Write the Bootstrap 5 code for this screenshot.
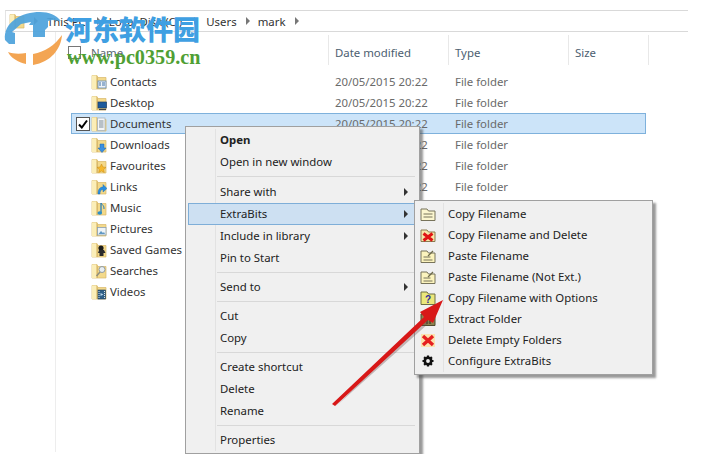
<!DOCTYPE html>
<html lang="en">
<head>
<meta charset="utf-8">
<title>ExtraBits</title>
<link href="https://cdn.jsdelivr.net/npm/bootstrap@5.3.0/dist/css/bootstrap.min.css" rel="stylesheet">
<style>
html,body{width:702px;height:454px;overflow:hidden;background:#fff;margin:0}
body{font-family:"Noto Sans","Open Sans","Liberation Sans",sans-serif;font-size:11.4px;line-height:21px;color:#2b2b2b}
.stage{position:relative;width:702px;height:454px;overflow:hidden;padding-top:10px}
.addr{margin-left:5px;margin-right:14px;height:22px;border:1px solid #d9d9d9;border-left-color:#e4e4e4;border-right:0;padding-left:3px;color:#333}
.addr svg{flex:none;margin-right:9px}
.crumb{margin-right:9px}
.crumb.c1{margin-left:1px;margin-right:11px}
.crumb.c2{margin-right:12px}
.tri{width:0;height:0;border-left:4px solid #777;border-top:4px solid transparent;border-bottom:4px solid transparent;margin-right:8px;flex:none}
.pane{margin-left:55px;border-left:1px solid #ededed;height:420px}
.heads{height:39px;color:#4c6070}
.hcell{height:30px;margin-top:3px;border-right:1px solid #e8e8e8;padding-left:6px;line-height:36px}
.hname{width:273px;padding-left:35px;color:#5a6772}
.hw{width:120px}
.hw2{width:80px}
.cb0{position:absolute;left:68px;top:46px;width:13px;height:13px;border:1px solid #777}
.fl{height:21px;margin-left:15px;width:575px}
.fl.sel{background:#cce4f9;box-shadow:inset 0 0 0 1px #7eb1dc}
.fl .mk{width:20px;flex:none;display:flex;align-items:center;justify-content:center;padding-left:3px}
.fl .ic{width:16px;height:16px;flex:none}
.fname{width:228px;padding-left:3px;flex:none;color:#333}
.fdate{width:120px;flex:none;color:#6a6a6a}
.ftype{color:#6a6a6a}
.chk{width:14px;height:14px;border:1px solid #555;background:#fff;display:flex;align-items:center;justify-content:center}
.menu1,.menu2{position:absolute;background:#f0f0f0;border:1px solid #a0a0a0;box-shadow:3px 3px 2px rgba(70,70,70,.55);color:#222}
.menu1{left:185px;top:126px;width:235px;height:328px;padding-top:2px}
.menu2{left:414px;top:200px;width:239px;height:175px;padding-top:2px}
.menu1:before,.menu2:before{content:"";position:absolute;top:2px;bottom:2px;background:#e2e2e2;width:1px}
.menu1:before{left:29px}
.menu2:before{left:28px}
.mi{height:22px;line-height:22px;padding-left:34px;position:relative}
.menu2 .mi{height:21px;line-height:21px;padding-left:33px}
.mi.hov{background:#cde0f2;box-shadow:inset 0 0 0 1px #7eaed8;margin:0 4px 0 2px;padding-left:32px}
.bold{font-weight:700}
.sp{height:1px;background:#d8d8d8;margin:3px 4px 3px 31px}
.sp.first{margin-bottom:4px}
.arr{position:absolute;right:11px;top:7px;width:0;height:0;border-left:4px solid #333;border-top:4px solid transparent;border-bottom:4px solid transparent}
.mi.hov .arr{right:7px}
.mic{position:absolute;left:5px;top:3px;width:16px;height:16px}
.overlay{position:absolute;left:0;top:0;pointer-events:none}
.wm1{position:absolute;left:65px;top:11px;font-family:"Noto Sans CJK SC",sans-serif;font-weight:900;font-size:27px;line-height:36px;color:#3f9fe2;white-space:nowrap}
.wm2{position:absolute;left:67px;top:46px;font-family:"Liberation Serif",serif;font-weight:700;font-size:20.2px;line-height:22px;color:#4f9f34;white-space:nowrap}
</style>
</head>
<body>
<svg width="0" height="0" style="position:absolute">
<defs>
<symbol id="fd" viewBox="0 0 16 16">
<path d="M1 1.500h5l1 2h8v11.500H1z" fill="#f3d98b" stroke="#d8b768" stroke-width=".7"/>
<path d="M1 1.500h4.500V15H1z" fill="#fbeeb8"/>
<path d="M5.500 1.500 7 3.500V15H5.500z" fill="#d9b96c"/>
</symbol>
</defs>
</svg>
<div class="stage">
  <div class="addr d-flex align-items-center">
    <svg width="16" height="16" viewBox="0 0 16 16"><use href="#fd"/></svg>
    <span class="tri"></span><span class="crumb c1">This PC</span><span class="tri"></span>
    <span class="crumb c2">Local Disk (C:)</span><span class="tri"></span>
    <span class="crumb">Users</span><span class="tri"></span>
    <span class="crumb">mark</span><span class="tri"></span>
  </div>
  <div class="pane">
    <div class="heads d-flex">
      <div class="hcell hname">Name</div>
      <div class="hcell hw">Date modified</div>
      <div class="hcell hw">Type</div>
      <div class="hcell hw2">Size</div>
    </div>
    <div class="fl d-flex">
      <div class="mk"></div>
      <svg class="ic align-self-center" viewBox="0 0 16 16"><use href="#fd"/><rect x="7" y="7" width="8" height="7" fill="#eef3f8" stroke="#5a86b8" stroke-width=".8"/><path d="M8 9h2M8 11h2M11 9h3M11 11h3" stroke="#3f70a8"/></svg>
      <div class="fname">Contacts</div><div class="fdate">20/05/2015 20:22</div><div class="ftype">File folder</div>
    </div>
    <div class="fl d-flex">
      <div class="mk"></div>
      <svg class="ic align-self-center" viewBox="0 0 16 16"><use href="#fd"/><rect x="7" y="7" width="8.500" height="6" fill="#1c5a9c" stroke="#1f3f66" stroke-width=".7"/><path d="M8 14.500h7" stroke="#444" stroke-width="1.200"/></svg>
      <div class="fname">Desktop</div><div class="fdate">20/05/2015 20:22</div><div class="ftype">File folder</div>
    </div>
    <div class="fl sel d-flex">
      <div class="mk"><span class="chk"><svg width="10" height="10" viewBox="0 0 10 10"><path d="M1 5.500 3.800 8.500 9 1.500" fill="none" stroke="#000" stroke-width="2"/></svg></span></div>
      <svg class="ic align-self-center" viewBox="0 0 16 16"><use href="#fd"/><rect x="6.500" y="2" width="7.500" height="12.500" fill="#f4f6f8" stroke="#a9b3bc" stroke-width=".8"/><path d="M8 5h4.500M8 7h4.500M8 9h4.500M8 11h4.500" stroke="#7d8b97"/></svg>
      <div class="fname">Documents</div><div class="fdate">20/05/2015 20:22</div><div class="ftype">File folder</div>
    </div>
    <div class="fl d-flex">
      <div class="mk"></div>
      <svg class="ic align-self-center" viewBox="0 0 16 16"><use href="#fd"/><path d="M9 7h4v4h2l-4 4.500L7 11h2z" fill="#3b8fe0" stroke="#1e64ad" stroke-width=".5"/></svg>
      <div class="fname">Downloads</div><div class="fdate">20/05/2015 20:22</div><div class="ftype">File folder</div>
    </div>
    <div class="fl d-flex">
      <div class="mk"></div>
      <svg class="ic align-self-center" viewBox="0 0 16 16"><use href="#fd"/><path d="M10.500 6l1.400 3 3.100.4-2.300 2.100.6 3.100-2.800-1.600-2.800 1.600.6-3.100L6 9.400 9.100 9z" fill="#f5b82e" stroke="#c98a16" stroke-width=".5"/></svg>
      <div class="fname">Favourites</div><div class="fdate">20/05/2015 20:22</div><div class="ftype">File folder</div>
    </div>
    <div class="fl d-flex">
      <div class="mk"></div>
      <svg class="ic align-self-center" viewBox="0 0 16 16"><use href="#fd"/><path d="M7 15c0-5 2-7 5-7V5.500l4 4-4 3.500v-2.500c-2 0-3 1.500-3 4.500z" fill="#2b8fe0" stroke="#1767ad" stroke-width=".4"/></svg>
      <div class="fname">Links</div><div class="fdate">20/05/2015 20:22</div><div class="ftype">File folder</div>
    </div>
    <div class="fl d-flex">
      <div class="mk"></div>
      <svg class="ic align-self-center" viewBox="0 0 16 16"><use href="#fd"/><path d="M10 3v10" stroke="#2b7fb8" stroke-width="1.300"/><ellipse cx="8.800" cy="13" rx="2.300" ry="1.800" fill="#2b8fc8"/><path d="M10 3c1 2 3.500 2.500 3 6" fill="none" stroke="#2b7fb8"/></svg>
      <div class="fname">Music</div><div class="fdate">20/05/2015 20:22</div><div class="ftype">File folder</div>
    </div>
    <div class="fl d-flex">
      <div class="mk"></div>
      <svg class="ic align-self-center" viewBox="0 0 16 16"><use href="#fd"/><rect x="6.500" y="6.500" width="8.500" height="7.500" fill="#eef3f6" stroke="#8aa0b2" stroke-width=".8"/><path d="M7.500 13l2.500-3 2 2 1-1 1 2z" fill="#5f98c4"/></svg>
      <div class="fname">Pictures</div><div class="fdate">20/05/2015 20:22</div><div class="ftype">File folder</div>
    </div>
    <div class="fl d-flex">
      <div class="mk"></div>
      <svg class="ic align-self-center" viewBox="0 0 16 16"><use href="#fd"/><circle cx="10" cy="6" r="2.600" fill="#1b1b1b"/><path d="M8 8h5l1.500 3h-2v3h-4v-3H7z" fill="#2a2a2a"/></svg>
      <div class="fname">Saved Games</div><div class="fdate">20/05/2015 20:22</div><div class="ftype">File folder</div>
    </div>
    <div class="fl d-flex">
      <div class="mk"></div>
      <svg class="ic align-self-center" viewBox="0 0 16 16"><use href="#fd"/><circle cx="11" cy="6.500" r="3" fill="#e8eef2" stroke="#8e9aa3"/><path d="M9 9l-3.500 4" stroke="#8e8e7e" stroke-width="1.500"/></svg>
      <div class="fname">Searches</div><div class="fdate">20/05/2015 20:22</div><div class="ftype">File folder</div>
    </div>
    <div class="fl d-flex">
      <div class="mk"></div>
      <svg class="ic align-self-center" viewBox="0 0 16 16"><use href="#fd"/><rect x="7" y="6" width="7.500" height="9" fill="#2f5f86" stroke="#1e3c55" stroke-width=".6"/><path d="M8 7v7M13.500 7v7" stroke="#d9e3ea" stroke-dasharray="1 1"/><path d="M9.500 9l3 1.500-3 1.500z" fill="#b9d4e8"/></svg>
      <div class="fname">Videos</div><div class="fdate">20/05/2015 20:22</div><div class="ftype">File folder</div>
    </div>
  </div>
  <div class="cb0"></div>

  <div class="menu1">
    <div class="mi bold">Open</div>
    <div class="mi">Open in new window</div>
    <div class="sp first"></div>
    <div class="mi">Share with<span class="arr"></span></div>
    <div class="mi hov">ExtraBits<span class="arr"></span></div>
    <div class="mi">Include in library<span class="arr"></span></div>
    <div class="mi">Pin to Start</div>
    <div class="sp"></div>
    <div class="mi">Send to<span class="arr"></span></div>
    <div class="sp"></div>
    <div class="mi">Cut</div>
    <div class="mi">Copy</div>
    <div class="sp"></div>
    <div class="mi">Create shortcut</div>
    <div class="mi">Delete</div>
    <div class="mi">Rename</div>
    <div class="sp"></div>
    <div class="mi">Properties</div>
  </div>

  <div class="menu2">
    <div class="mi"><svg class="mic" viewBox="0 0 16 16"><path d="M1 3h6l1.500 2H15v9.500H1z" fill="#fbf6cf" stroke="#77735a"/><path d="M3.500 8h9M3.500 11h9" stroke="#77735a"/></svg>Copy Filename</div>
    <div class="mi"><svg class="mic" viewBox="0 0 16 16"><path d="M1 3h6l1.500 2H15v9.500H1z" fill="#f7e6a8" stroke="#8a7a50"/><path d="M3.500 6.500 12.500 13.500M12.500 6.500 3.500 13.500" stroke="#e01414" stroke-width="3"/></svg>Copy Filename and Delete</div>
    <div class="mi"><svg class="mic" viewBox="0 0 16 16"><path d="M1 3h6l1.500 2H15v9.500H1z" fill="#fbf3bd" stroke="#77735a"/><path d="M3.500 9h7M3.500 12h9" stroke="#77735a"/><path d="M8 8l5-5" stroke="#6d6a4a" stroke-width="1.300"/></svg>Paste Filename</div>
    <div class="mi"><svg class="mic" viewBox="0 0 16 16"><path d="M1 3h6l1.500 2H15v9.500H1z" fill="#fbf3bd" stroke="#77735a"/><path d="M3.500 9h7M3.500 12h9" stroke="#77735a"/><path d="M8 8l5-5" stroke="#6d6a4a" stroke-width="1.300"/></svg>Paste Filename (Not Ext.)</div>
    <div class="mi"><svg class="mic" viewBox="0 0 16 16"><path d="M1 2h6l1.500 2H15v10.500H1z" fill="#ebe77a" stroke="#6f6f45"/><text x="8" y="12.500" text-anchor="middle" font-family="Liberation Sans" font-weight="700" font-size="10" fill="#2d2a9c">?</text></svg>Copy Filename with Options</div>
    <div class="mi"><svg class="mic" viewBox="0 0 16 16"><path d="M1 3h6l1.500 2H15v9.500H1z" fill="#8f8650" stroke="#4f4a2c"/><path d="M7 7v6M10 7v6" stroke="#2a2818"/></svg>Extract Folder</div>
    <div class="mi"><svg class="mic" viewBox="0 0 16 16"><rect x="1" y="2" width="14" height="13" fill="#fbe3b0"/><path d="M3 4 13 13M13 4 3 13" stroke="#e62020" stroke-width="3.400"/></svg>Delete Empty Folders</div>
    <div class="mi"><svg class="mic" viewBox="0 0 16 16"><circle cx="8" cy="8" r="3.200" fill="none" stroke="#111" stroke-width="2.600"/><path d="M8 2.500v2M8 11.500v2M2.500 8h2M11.500 8h2M4.100 4.100l1.500 1.500M10.400 10.400l1.500 1.500M11.900 4.100l-1.500 1.500M5.600 10.400l-1.500 1.500" stroke="#111" stroke-width="2.200"/></svg>Configure ExtraBits</div>
  </div>

  <svg class="overlay" width="702" height="454" viewBox="0 0 702 454">
    <path d="M335 407 429 323 434 325 424 319z" fill="#6a4a4a" fill-opacity=".35"/>
    <path d="M332 404 424 317 420 312 443 300 433 323 428 320 335 406z" fill="#d81818"/>
    <path d="M5 40C3 22 22 12 40 12c9 0 16 3 21 9l-9-1-4 1v6l-3 3v7H33V25h-4l2-3-10 2-9 8 3 1v11H9z" fill="#4da2dc" fill-opacity=".93"/>
    <path d="M8 52c5 2 12 2 18 1v11C18 62 11 58 8 52zM33 54c12-2 22-9 29-19-1 14-11 27-29 30z" fill="#f3a553"/>
  </svg>
  <div class="wm1">河东软件园</div>
  <div class="wm2">www.pc0359.cn</div>
</div>
<script src="https://cdn.jsdelivr.net/npm/bootstrap@5.3.0/dist/js/bootstrap.bundle.min.js"></script>
</body>
</html>
